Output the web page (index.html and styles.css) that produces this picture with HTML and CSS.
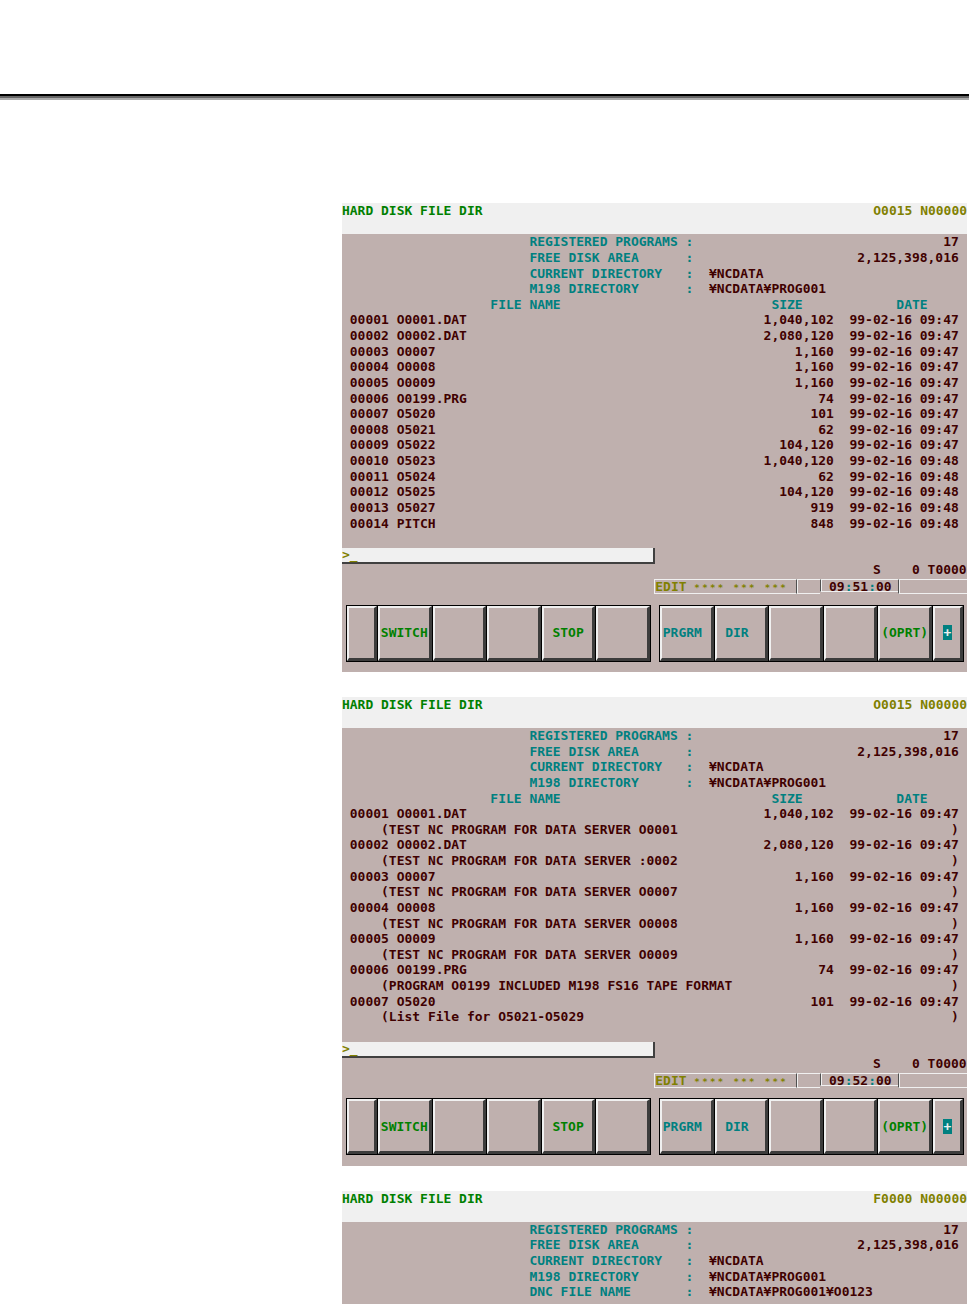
FILE: index.html
```html
<!DOCTYPE html>
<html lang="en">
<head>
  <meta charset="UTF-8">
  <title>Hard Disk File Directory</title>
  <link rel="stylesheet" href="styles.css">
</head>
<body>
  <div class="page-head"></div>
  <div class="rule"></div>

  <div class="figures">

    <!-- Screen 1: file list -->
    <div class="crt">
      <div class="crt-head"><span class="crt-title">HARD DISK FILE DIR</span><span class="crt-mode">O0015 N00000</span></div>
      <div class="ln info"><span class="key">REGISTERED PROGRAMS</span><span class="colon">:</span><span class="amount">17</span></div>
      <div class="ln info"><span class="key">FREE DISK AREA</span><span class="colon">:</span><span class="amount">2,125,398,016</span></div>
      <div class="ln info"><span class="key">CURRENT DIRECTORY</span><span class="colon">:</span><span class="path">¥NCDATA</span></div>
      <div class="ln info"><span class="key">M198 DIRECTORY</span><span class="colon">:</span><span class="path">¥NCDATA¥PROG001</span></div>
      <div class="ln cols"><span class="h-name">FILE NAME</span><span class="h-size">SIZE</span><span>DATE</span></div>
      <div class="ln file"><span class="no">00001</span><span class="fname">O0001.DAT</span><span class="size">1,040,102</span><span class="date">99-02-16 09:47</span></div>
      <div class="ln file"><span class="no">00002</span><span class="fname">O0002.DAT</span><span class="size">2,080,120</span><span class="date">99-02-16 09:47</span></div>
      <div class="ln file"><span class="no">00003</span><span class="fname">O0007</span><span class="size">1,160</span><span class="date">99-02-16 09:47</span></div>
      <div class="ln file"><span class="no">00004</span><span class="fname">O0008</span><span class="size">1,160</span><span class="date">99-02-16 09:47</span></div>
      <div class="ln file"><span class="no">00005</span><span class="fname">O0009</span><span class="size">1,160</span><span class="date">99-02-16 09:47</span></div>
      <div class="ln file"><span class="no">00006</span><span class="fname">O0199.PRG</span><span class="size">74</span><span class="date">99-02-16 09:47</span></div>
      <div class="ln file"><span class="no">00007</span><span class="fname">O5020</span><span class="size">101</span><span class="date">99-02-16 09:47</span></div>
      <div class="ln file"><span class="no">00008</span><span class="fname">O5021</span><span class="size">62</span><span class="date">99-02-16 09:47</span></div>
      <div class="ln file"><span class="no">00009</span><span class="fname">O5022</span><span class="size">104,120</span><span class="date">99-02-16 09:47</span></div>
      <div class="ln file"><span class="no">00010</span><span class="fname">O5023</span><span class="size">1,040,120</span><span class="date">99-02-16 09:48</span></div>
      <div class="ln file"><span class="no">00011</span><span class="fname">O5024</span><span class="size">62</span><span class="date">99-02-16 09:48</span></div>
      <div class="ln file"><span class="no">00012</span><span class="fname">O5025</span><span class="size">104,120</span><span class="date">99-02-16 09:48</span></div>
      <div class="ln file"><span class="no">00013</span><span class="fname">O5027</span><span class="size">919</span><span class="date">99-02-16 09:48</span></div>
      <div class="ln file"><span class="no">00014</span><span class="fname">PITCH</span><span class="size">848</span><span class="date">99-02-16 09:48</span></div>
      <div class="ln"></div>
      <div class="ln"><div class="prompt">&gt;_</div></div>
      <div class="ln spindle">S    0 T0000</div>
      <div class="ln status">
        <span class="seg seg-mode">EDIT <span class="stars">**** *** ***</span></span>
        <span class="seg seg-blank"></span>
        <span class="seg seg-clock">09<i>:</i>51<i>:</i>00</span>
        <span class="seg seg-rest"></span>
      </div>
      <div class="softkeys">
        <div class="keygroup">
          <div class="key-btn narrow"></div>
          <div class="key-btn green">SWITCH</div>
          <div class="key-btn"></div>
          <div class="key-btn"></div>
          <div class="key-btn green">STOP</div>
          <div class="key-btn"></div>
        </div>
        <div class="keygroup">
          <div class="key-btn teal"><span class="shift">PRGRM</span></div>
          <div class="key-btn teal"><span class="shift">DIR</span></div>
          <div class="key-btn"></div>
          <div class="key-btn"></div>
          <div class="key-btn green">(OPRT)</div>
          <div class="key-btn narrow"><span class="more">+</span></div>
        </div>
      </div>
    </div>

    <!-- Screen 2: file list with comments -->
    <div class="crt">
      <div class="crt-head"><span class="crt-title">HARD DISK FILE DIR</span><span class="crt-mode">O0015 N00000</span></div>
      <div class="ln info"><span class="key">REGISTERED PROGRAMS</span><span class="colon">:</span><span class="amount">17</span></div>
      <div class="ln info"><span class="key">FREE DISK AREA</span><span class="colon">:</span><span class="amount">2,125,398,016</span></div>
      <div class="ln info"><span class="key">CURRENT DIRECTORY</span><span class="colon">:</span><span class="path">¥NCDATA</span></div>
      <div class="ln info"><span class="key">M198 DIRECTORY</span><span class="colon">:</span><span class="path">¥NCDATA¥PROG001</span></div>
      <div class="ln cols"><span class="h-name">FILE NAME</span><span class="h-size">SIZE</span><span>DATE</span></div>
      <div class="ln file"><span class="no">00001</span><span class="fname">O0001.DAT</span><span class="size">1,040,102</span><span class="date">99-02-16 09:47</span></div>
      <div class="ln note"><span class="note-text">(TEST NC PROGRAM FOR DATA SERVER O0001</span><span>)</span></div>
      <div class="ln file"><span class="no">00002</span><span class="fname">O0002.DAT</span><span class="size">2,080,120</span><span class="date">99-02-16 09:47</span></div>
      <div class="ln note"><span class="note-text">(TEST NC PROGRAM FOR DATA SERVER :0002</span><span>)</span></div>
      <div class="ln file"><span class="no">00003</span><span class="fname">O0007</span><span class="size">1,160</span><span class="date">99-02-16 09:47</span></div>
      <div class="ln note"><span class="note-text">(TEST NC PROGRAM FOR DATA SERVER O0007</span><span>)</span></div>
      <div class="ln file"><span class="no">00004</span><span class="fname">O0008</span><span class="size">1,160</span><span class="date">99-02-16 09:47</span></div>
      <div class="ln note"><span class="note-text">(TEST NC PROGRAM FOR DATA SERVER O0008</span><span>)</span></div>
      <div class="ln file"><span class="no">00005</span><span class="fname">O0009</span><span class="size">1,160</span><span class="date">99-02-16 09:47</span></div>
      <div class="ln note"><span class="note-text">(TEST NC PROGRAM FOR DATA SERVER O0009</span><span>)</span></div>
      <div class="ln file"><span class="no">00006</span><span class="fname">O0199.PRG</span><span class="size">74</span><span class="date">99-02-16 09:47</span></div>
      <div class="ln note"><span class="note-text">(PROGRAM O0199 INCLUDED M198 FS16 TAPE FORMAT</span><span>)</span></div>
      <div class="ln file"><span class="no">00007</span><span class="fname">O5020</span><span class="size">101</span><span class="date">99-02-16 09:47</span></div>
      <div class="ln note"><span class="note-text">(List File for O5021-O5029</span><span>)</span></div>
      <div class="ln"></div>
      <div class="ln"><div class="prompt">&gt;_</div></div>
      <div class="ln spindle">S    0 T0000</div>
      <div class="ln status">
        <span class="seg seg-mode">EDIT <span class="stars">**** *** ***</span></span>
        <span class="seg seg-blank"></span>
        <span class="seg seg-clock">09<i>:</i>52<i>:</i>00</span>
        <span class="seg seg-rest"></span>
      </div>
      <div class="softkeys">
        <div class="keygroup">
          <div class="key-btn narrow"></div>
          <div class="key-btn green">SWITCH</div>
          <div class="key-btn"></div>
          <div class="key-btn"></div>
          <div class="key-btn green">STOP</div>
          <div class="key-btn"></div>
        </div>
        <div class="keygroup">
          <div class="key-btn teal"><span class="shift">PRGRM</span></div>
          <div class="key-btn teal"><span class="shift">DIR</span></div>
          <div class="key-btn"></div>
          <div class="key-btn"></div>
          <div class="key-btn green">(OPRT)</div>
          <div class="key-btn narrow"><span class="more">+</span></div>
        </div>
      </div>
    </div>

    <!-- Screen 3: DNC file selected -->
    <div class="crt">
      <div class="crt-head"><span class="crt-title">HARD DISK FILE DIR</span><span class="crt-mode">F0000 N00000</span></div>
      <div class="ln info"><span class="key">REGISTERED PROGRAMS</span><span class="colon">:</span><span class="amount">17</span></div>
      <div class="ln info"><span class="key">FREE DISK AREA</span><span class="colon">:</span><span class="amount">2,125,398,016</span></div>
      <div class="ln info"><span class="key">CURRENT DIRECTORY</span><span class="colon">:</span><span class="path">¥NCDATA</span></div>
      <div class="ln info"><span class="key">M198 DIRECTORY</span><span class="colon">:</span><span class="path">¥NCDATA¥PROG001</span></div>
      <div class="ln info"><span class="key">DNC FILE NAME</span><span class="colon">:</span><span class="path">¥NCDATA¥PROG001¥O0123</span></div>
    </div>

  </div>
</body>
</html>
```

FILE: styles.css
```css
/* Page */
body {
  margin: 0;
  background: #fff;
  width: 969px;
}
.page-head {
  height: 94px;
}
.rule {
  height: 6px;
  background: linear-gradient(#000 0 2px, #666 2px 4px, #ababab 4px 6px);
}
.figures {
  display: flex;
  flex-direction: column;
  gap: 25px;
  padding: 103px 0 0 342px;
}

/* CNC screen, 80 x 30 character grid */
.crt {
  width: 625px;
  height: 468.75px;
  background: #bfb0ae;
  color: #400000;
  font: bold 12.98px/15.625px "DejaVu Sans Mono", monospace;
  overflow: hidden;
}
.crt-head {
  height: 31.25px;
  background: #f0f0f0;
  display: flex;
  justify-content: space-between;
  align-items: flex-start;
}
.crt-title {
  color: #008000;
}
.crt-mode {
  color: #808000;
}
.ln {
  height: 15.625px;
  display: flex;
  white-space: pre;
}

/* info block */
.info {
  padding-left: 24ch;
}
.info .key {
  width: 20ch;
  color: #008080;
}
.info .colon {
  width: 1ch;
  color: #008080;
}
.info .amount {
  width: 34ch;
  text-align: right;
}
.info .path {
  padding-left: 2ch;
}

/* column header */
.cols {
  padding-left: 19ch;
  color: #008080;
}
.h-name {
  width: 36ch;
}
.h-size {
  width: 16ch;
}

/* file rows */
.file {
  padding-left: 1ch;
}
.file .no {
  width: 6ch;
}
.file .fname {
  width: 43ch;
}
.file .size {
  width: 13ch;
  text-align: right;
}
.file .date {
  padding-left: 2ch;
}
.note {
  width: 79ch;
  padding-left: 5ch;
  box-sizing: border-box;
}
.note-text {
  flex: 1;
}

/* key-in line */
.prompt {
  width: 311px;
  height: 14px;
  margin-top: 1px;
  background: #f0f0f0;
  border-right: 2px solid #404040;
  border-bottom: 2px solid #404040;
  color: #808000;
  line-height: 14px;
}
.spindle {
  padding-left: 68ch;
}

/* status bar */
.status {
  padding-left: 40ch;
}
.seg {
  height: 13px;
  margin-top: 1px;
  line-height: 13px;
  border-top: 1px solid #f0f0f0;
  border-bottom: 1px solid #f0f0f0;
}
.seg + .seg {
  border-left: 1px solid #505050;
  box-shadow: inset 1px 0 #f0f0f0;
}
.seg-mode {
  width: 18ch;
  color: #808000;
  border-left: 1px solid #f0f0f0;
}
/* small stars, still one cell each */
.seg-mode .stars {
  font-size: 9px;
  letter-spacing: 2.39px;
}
.seg-blank {
  width: 3ch;
}
.seg-clock {
  width: 10ch;
  padding-left: 1ch;
  box-sizing: border-box;
}
.seg-clock i {
  font-style: normal;
  color: #008080;
}
.seg-rest {
  flex: 1;
}

/* soft keys */
.softkeys {
  display: flex;
  gap: 8px;
  padding: 11px 0 0 4px;
}
.keygroup {
  width: 305px;
  height: 57px;
  display: flex;
  gap: 1px;
  padding: 1px;
  background: #000;
  box-sizing: border-box;
}
.key-btn {
  flex: 1;
  display: flex;
  align-items: center;
  justify-content: center;
  border-top: 2px solid #f0f0f0;
  border-left: 2px solid #f0f0f0;
  border-right: 3px solid #3c3c3c;
  border-bottom: 3px solid #3c3c3c;
  background: #bfb0ae;
}
.key-btn.narrow {
  flex: 0 0 30px;
  box-sizing: border-box;
}
.key-btn.green {
  color: #008000;
}
.key-btn.teal {
  color: #008080;
}
.shift {
  margin-right: 8px;
}
.more {
  width: 9px;
  height: 15px;
  background: #008080;
  color: #f0f0f0;
  line-height: 15px;
  text-align: center;
}
```
